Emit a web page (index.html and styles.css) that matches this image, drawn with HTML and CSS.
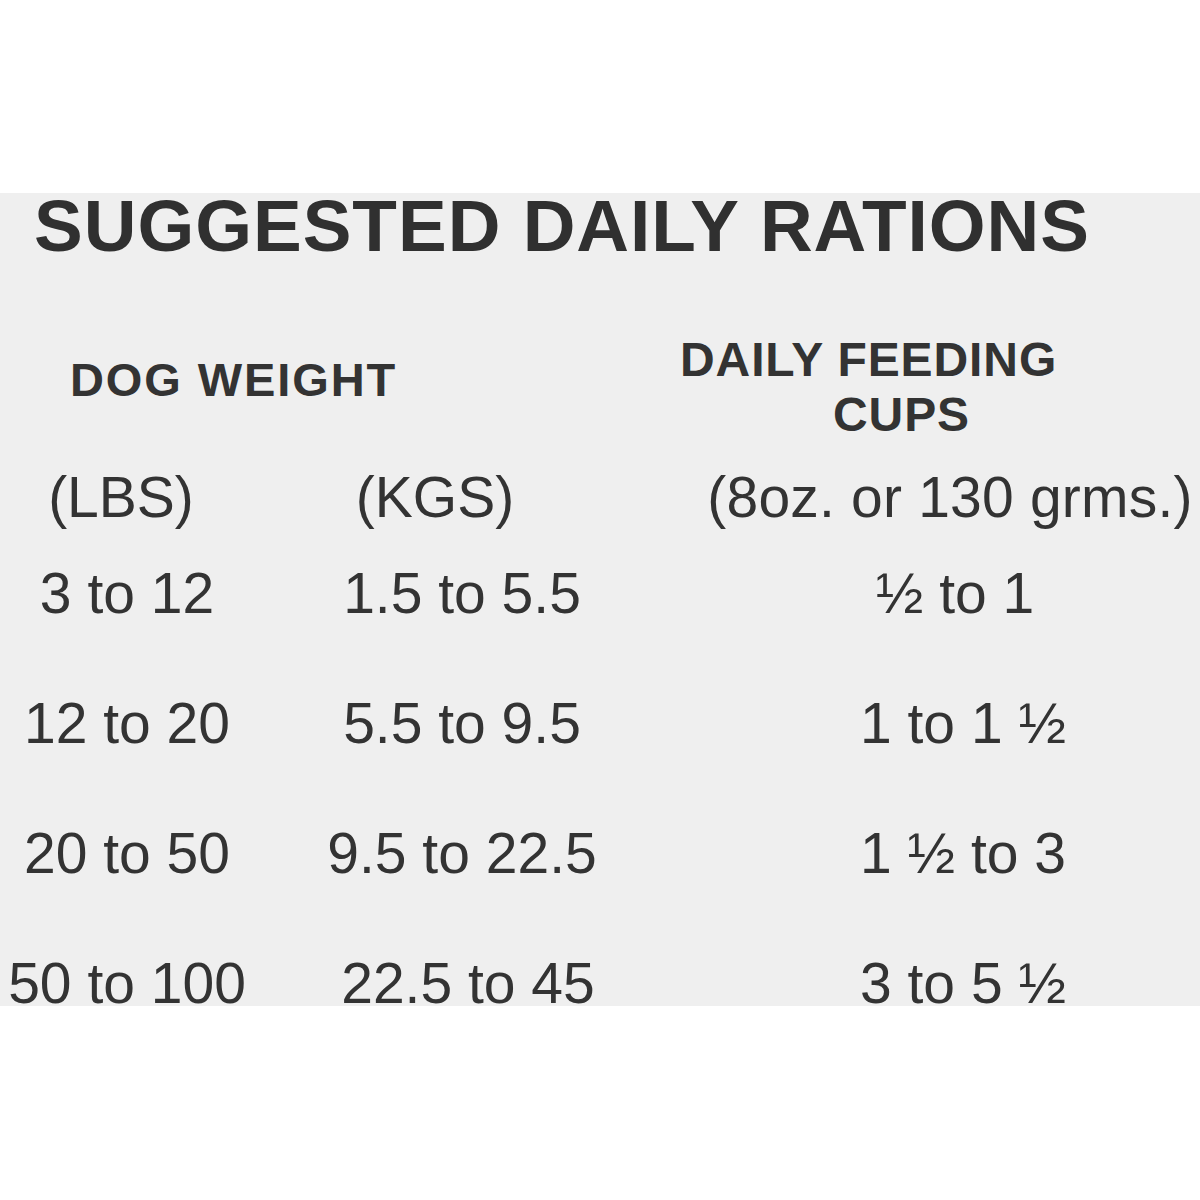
FILE: index.html
```html
<!DOCTYPE html>
<html lang="en">
<head>
<meta charset="utf-8">
<title>Suggested Daily Rations</title>
<link rel="stylesheet" href="styles.css">
</head>
<body>
<section class="panel">
  <h1 class="title">SUGGESTED DAILY RATIONS</h1>
  <div class="head-row">
    <div class="dog-weight">DOG WEIGHT</div>
    <div class="feeding">
      <div class="feeding-l1">DAILY FEEDING</div>
      <div class="feeding-l2">CUPS</div>
    </div>
  </div>
  <div class="row units">
    <div class="c1 u1">(LBS)</div>
    <div class="c2 u2">(KGS)</div>
    <div class="c3 u3">(8oz. or 130 grms.)</div>
  </div>
  <div class="row data">
    <div class="c1">3 to 12</div>
    <div class="c2">1.5 to 5.5</div>
    <div class="c3 d3 d3first">½ to 1</div>
  </div>
  <div class="row data">
    <div class="c1">12 to 20</div>
    <div class="c2">5.5 to 9.5</div>
    <div class="c3 d3">1 to 1 ½</div>
  </div>
  <div class="row data">
    <div class="c1">20 to 50</div>
    <div class="c2">9.5 to 22.5</div>
    <div class="c3 d3">1 ½ to 3</div>
  </div>
  <div class="row data">
    <div class="c1">50 to 100</div>
    <div class="c2 d2last">22.5 to 45</div>
    <div class="c3 d3">3 to 5 ½</div>
  </div>
</section>
</body>
</html>
```
FILE: styles.css
```css
html, body {
  margin: 0;
  padding: 0;
  background: #ffffff;
}
body {
  width: 1200px;
  height: 1200px;
  font-family: "Liberation Sans", Arial, sans-serif;
  color: #333333;
}
.panel {
  margin-top: 193px;
  height: 813px;
  background: #efefef;
}
.title {
  margin: 0;
  padding-left: 34px;
  font-size: 73px;
  font-weight: bold;
  letter-spacing: 1px;
  line-height: 66px;
  height: 66px;
  color: #303030;
  white-space: nowrap;
}
.head-row {
  display: grid;
  grid-template-columns: 670px 530px;
  height: 212px;
  font-weight: bold;
  font-size: 48px;
  color: #333333;
}
.dog-weight {
  padding-top: 93px;
  padding-left: 70px;
  font-size: 47px;
  letter-spacing: 1.9px;
  line-height: 55px;
}
.feeding {
  padding-top: 73px;
  line-height: 55px;
  letter-spacing: 0.9px;
}
.feeding-l1 {
  padding-left: 10px;
}
.feeding-l2 {
  padding-left: 163px;
}
.row {
  display: grid;
  grid-template-columns: 254px 416px 530px;
  font-size: 57px;
  text-align: center;
  white-space: nowrap;
}
.units {
  line-height: 52px;
  height: 52px;
  margin-bottom: 5px;
}
.u1 {
  padding-right: 12px;
}
.u2 {
  padding-right: 54px;
}
.u3 {
  padding-left: 30px;
  letter-spacing: 0.2px;
}
.data {
  line-height: 130px;
  height: 130px;
}
.d3 {
  padding-left: 56px;
}
.d3first {
  padding-left: 40px;
}
.d2last {
  padding-left: 12px;
}
```
